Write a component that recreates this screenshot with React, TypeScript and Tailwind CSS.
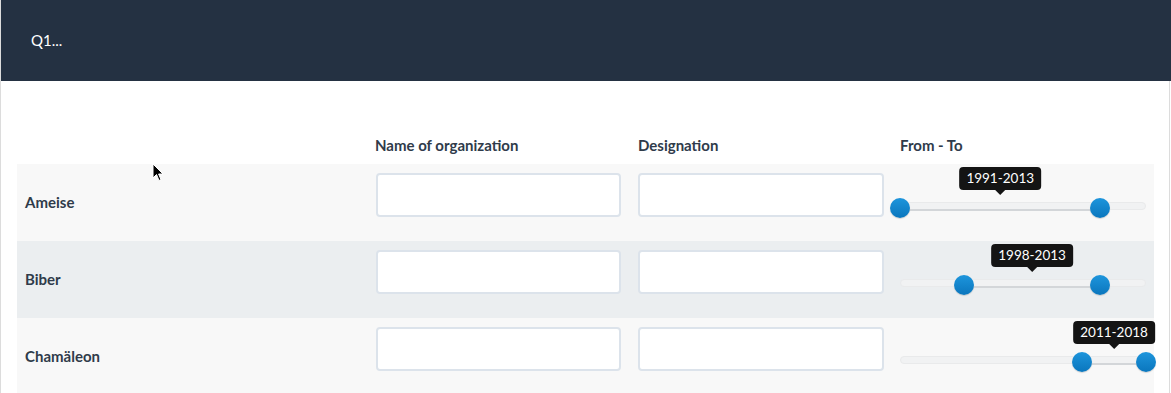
import * as React from "react";

interface Row {
  label: string;
  from: number;
  to: number;
  bg: string;
}

const MIN = 1991;
const MAX = 2018;
const TRACK = 246;

const rows: Row[] = [
  { label: "Ameise", from: 1991, to: 2013, bg: "bg-[#f8f8f8]" },
  { label: "Biber", from: 1998, to: 2013, bg: "bg-[#ebeef0]" },
  { label: "Chamäleon", from: 2011, to: 2018, bg: "bg-[#f8f8f8]" },
];

function pos(v: number) {
  return 8 + ((v - MIN) / (MAX - MIN)) * TRACK;
}

function RangeSlider({ from, to }: { from: number; to: number }) {
  const a = pos(from);
  const b = pos(to);
  const mid = (a + b) / 2;
  return (
    <div className="relative h-[77px]">
      {/* track */}
      <div className="absolute left-[8px] right-[8px] top-[38px] h-[8px] rounded-full bg-[#f1f2f3] border border-[#e9eaeb]" />
      {/* selected range */}
      <div
        className="absolute top-[45px] h-[2px] bg-[#d3d6d9]"
        style={{ left: a, width: b - a }}
      />
      {/* thumbs */}
      {[a, b].map((x, i) => (
        <div
          key={i}
          className="absolute top-[34px] h-[20px] w-[20px] -ml-[10px] rounded-full bg-gradient-to-b from-[#1d95dc] to-[#0a76bd] shadow-[0_1px_1px_rgba(0,0,0,0.15)]"
          style={{ left: x }}
        />
      ))}
      {/* tooltip */}
      <div
        className="absolute top-[3px] -translate-x-1/2 flex flex-col items-center"
        style={{ left: mid }}
      >
        <div className="h-[23px] px-[7px] rounded-[4px] bg-[#141414] text-white text-[13.5px] leading-[23px] whitespace-nowrap">
          {from}-{to}
        </div>
        <div className="h-0 w-0 border-x-[5px] border-x-transparent border-t-[5px] border-t-[#141414]" />
      </div>
    </div>
  );
}

export default function App() {
  return (
    <div
      className="relative w-[1171px] h-[393px] overflow-hidden bg-white border-l border-[#dcdcdc]"
      style={{ fontFamily: "Lato, 'Open Sans', sans-serif" }}
    >
      {/* Header */}
      <header className="h-[81px] bg-[#243142] flex items-center pl-[30px]">
        <span className="text-white text-[15px]">Q1...</span>
      </header>

      <div className="w-[1169px] h-[312px] border-r border-[#dcdcdc]">
        <div className="pt-[53px] pl-[16px]">
          <div className="grid grid-cols-[350px_262px_263px_262px]">
            {/* column headings */}
            <div className="h-[30px]" />
            <div className="h-[30px] pl-[8px] text-[15px] font-bold text-[#2f3b4a] leading-[22px]">
              Name of organization
            </div>
            <div className="h-[30px] pl-[9px] text-[15px] font-bold text-[#2f3b4a] leading-[22px]">
              Designation
            </div>
            <div className="h-[30px] pl-[8px] text-[15px] font-bold text-[#2f3b4a] leading-[22px]">
              From - To
            </div>

            {rows.map((r) => (
              <React.Fragment key={r.label}>
                <div
                  className={`${r.bg} h-[77px] flex items-center pl-[8px] text-[15px] font-bold text-[#2f3b4a]`}
                >
                  {r.label}
                </div>
                <div className={`${r.bg} h-[77px] pt-[9px] pl-[9px] pr-[8px]`}>
                  <input
                    type="text"
                    className="block w-[245px] h-[44px] rounded-[4px] border-2 border-[#dce3eb] bg-white outline-none"
                  />
                </div>
                <div className={`${r.bg} h-[77px] pt-[9px] pl-[9px] pr-[8px]`}>
                  <input
                    type="text"
                    className="block w-[246px] h-[44px] rounded-[4px] border-2 border-[#dce3eb] bg-white outline-none"
                  />
                </div>
                <div className={r.bg}>
                  <RangeSlider from={r.from} to={r.to} />
                </div>
              </React.Fragment>
            ))}
          </div>
        </div>
      </div>

      {/* mouse pointer */}
      <svg
        className="absolute left-[151px] top-[163px]"
        width="12"
        height="19"
        viewBox="0 0 12 19"
      >
        <path
          d="M1 1 L1 15 L4.5 11.5 L7 17.5 L9 16.6 L6.6 11 L11 11 Z"
          fill="#000"
          stroke="#fff"
          strokeWidth="1"
        />
      </svg>
    </div>
  );
}
